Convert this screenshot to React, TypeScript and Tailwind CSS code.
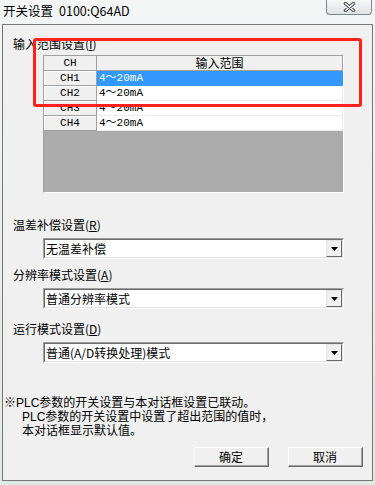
import React from "react";

const cjk = "font-['Noto_Sans_CJK_SC','Noto_Sans',sans-serif]";
const sim = "font-['Liberation_Mono','Noto_Sans_CJK_SC',monospace]";
const note = "font-['Liberation_Sans','Noto_Sans_CJK_SC',sans-serif]";

const rows = [
  { ch: "CH1", range: "4～20mA", selected: true },
  { ch: "CH2", range: "4～20mA", selected: false },
  { ch: "CH3", range: "4～20mA", selected: false },
  { ch: "CH4", range: "4～20mA", selected: false },
];

const Label = ({ text, key_, className = "" }: { text: string; key_: string; className?: string }) => (
  <div className={`pl-[10px] h-[16px] text-[12px] leading-[16px] text-black ${className}`}>
    {text}(<span className="underline">{key_}</span>)
  </div>
);

const Combo = ({ value, className = "" }: { value: string; className?: string }) => (
  <div
    className={`ml-[40px] w-[301px] h-[21px] border border-t-[#a0a0a0] border-l-[#a0a0a0] border-b-white border-r-white ${className}`}
  >
    <div className="flex h-full border border-t-[#696969] border-l-[#696969] border-b-[#e3e3e3] border-r-[#e3e3e3] bg-white">
      <div className="flex-1 pl-[1px] text-[12px] leading-[17px] text-black">{value}</div>
      <div className="flex w-[16px] items-center justify-center border border-t-[#e3e3e3] border-l-[#e3e3e3] border-b-[#696969] border-r-[#696969] bg-[#f0f0f0]">
        <svg width="7" height="4" viewBox="0 0 7 4">
          <path d="M0 0H7L3.5 4Z" fill="#000" />
        </svg>
      </div>
    </div>
  </div>
);

const Btn = ({ text }: { text: string }) => (
  <div className="w-[75px] h-[20px] border border-t-white border-l-white border-b-[#696969] border-r-[#696969] bg-[#f0f0f0]">
    <div className="flex h-full items-center justify-center border-b border-r border-b-[#a0a0a0] border-r-[#a0a0a0] text-[12px] text-black">
      {text}
    </div>
  </div>
);

export default function App() {
  return (
    <div
      className={`relative w-[375px] h-[485px] overflow-hidden ${cjk} bg-[linear-gradient(180deg,#f4f6f6_0%,#e9f0ef_40%,#dcece2_100%)]`}
    >
      {/* title bar */}
      <div className="flex h-[24px] items-start">
        <div className="mt-[2px] pl-[3px] text-[12.5px] leading-[17px] text-black">
          开关设置<span className="ml-[6px]">0100:Q64AD</span>
        </div>
        <div className="ml-auto mr-[3px] flex h-[15px] w-[46px] items-center justify-center rounded-b-[4px] border border-t-0 border-[#78858a] bg-[linear-gradient(180deg,#f6f7f7,#dfe3e4)]">
          <svg width="13" height="10" viewBox="0 0 13 10">
            <path d="M2.5 1.5L10.5 8.5M10.5 1.5L2.5 8.5" stroke="#3b4247" strokeWidth="3.4" strokeLinecap="round" />
            <path d="M2.5 1.5L10.5 8.5M10.5 1.5L2.5 8.5" stroke="#ffffff" strokeWidth="1.6" strokeLinecap="round" />
          </svg>
        </div>
      </div>

      {/* dialog body */}
      <div className="ml-[2px] w-[371px] h-[457px] border border-[#767676] bg-[#f0f0f0] flex flex-col">
        <Label text="输入范围设置" key_="I" className="mt-[11px]" />

        <div className="mt-[3px] ml-[40px] w-[301px] h-[138px] border border-t-[#a0a0a0] border-l-[#a0a0a0] border-b-white border-r-white">
          <div className="flex h-full flex-col bg-[#ababab]">
            <div className="flex h-[15px]">
              <div className={`w-[53px] border-b border-r border-[#a0a0a0] bg-[#f0f0f0] text-center text-[11px] leading-[14px] ${sim}`}>
                CH
              </div>
              <div className="flex-1 border-b border-r border-[#a0a0a0] bg-[#f0f0f0] text-center text-[12px] leading-[14px]">
                输入范围
              </div>
            </div>
            {rows.map((r) => (
              <div key={r.ch} className="flex h-[15px]">
                <div
                  className={`w-[53px] border-b border-r border-[#a0a0a0] bg-[#f0f0f0] shadow-[inset_1px_1px_0_#fff] text-center text-[11px] leading-[14px] ${sim}`}
                >
                  {r.ch}
                </div>
                <div
                  className={`flex-1 border-b border-r pl-[2px] text-[11px] leading-[14px] ${sim} ${
                    r.selected ? "bg-[#3399ff] text-white border-[#3399ff]" : "bg-white text-black border-[#ececec]"
                  }`}
                >
                  {r.range}
                </div>
              </div>
            ))}
          </div>
        </div>

        <Label text="温差补偿设置" key_="R" className="mt-[24px]" />
        <Combo value="无温差补偿" className="mt-[5px]" />

        <Label text="分辨率模式设置" key_="A" className="mt-[8px]" />
        <Combo value="普通分辨率模式" className="mt-[5px]" />

        <Label text="运行模式设置" key_="D" className="mt-[12px]" />
        <Combo value="普通(A/D转换处理)模式" className="mt-[5px]" />

        <div className={`mt-[33px] pl-[1px] text-[12px] leading-[14px] text-black ${note}`}>
          <div>※PLC参数的开关设置与本对话框设置已联动。</div>
          <div className="pl-[18px]">PLC参数的开关设置中设置了超出范围的值时，</div>
          <div className="pl-[18px]">本对话框显示默认值。</div>
        </div>

        <div className="mt-[9px] flex justify-end gap-[19px] pr-[9px]">
          <Btn text="确定" />
          <Btn text="取消" />
        </div>
      </div>

      {/* red annotation box */}
      <div className="absolute left-[33px] top-[38px] w-[329px] h-[69px] rounded-[3px] border-[3px] border-[#fe2117]" />
    </div>
  );
}
